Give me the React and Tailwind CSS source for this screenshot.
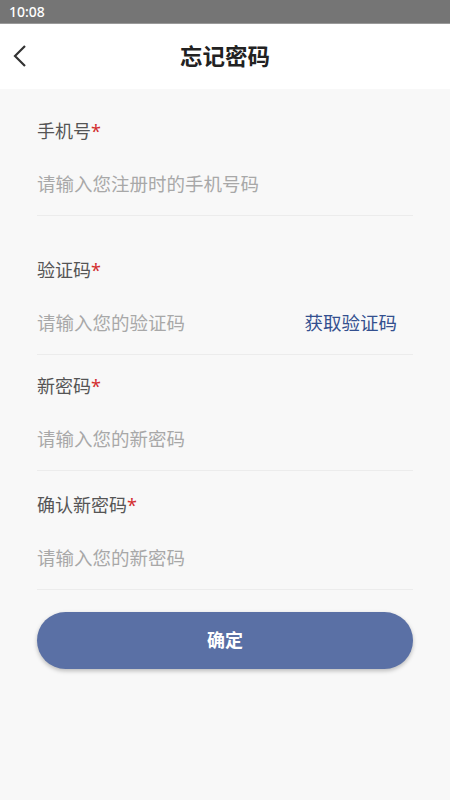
const Field = ({ label, placeholder, extra, className }) => (
	<div className={className}>
		<div className="text-[18px] leading-[24px] text-[#555555]">
			{label}
			<span className="text-[#d32f2f]">*</span>
		</div>
		<div className="flex items-center justify-between mt-[29px] pb-[19px] border-b border-[#ececec]">
			<span className="text-[18.5px] leading-[24px] text-[#a8a8a8]">{placeholder}</span>
			{extra && <span className="text-[18.5px] leading-[24px] text-[#34508f] mr-[16px]">{extra}</span>}
		</div>
	</div>
);

const App = () => {
	return (
		<div
			className="w-[450px] h-[800px] flex flex-col bg-[#f8f8f8]"
			style={{ fontFamily: '"Noto Sans", "Noto Sans CJK SC", sans-serif' }}
		>
			{/* 状态栏 */}
			<div className="h-[24px] bg-[#757575] flex items-center px-[9px] text-white text-[14px] font-medium border-b border-[#9a9a9a]">
				10:08
			</div>
			{/* 头部 */}
			<div className="h-[65px] bg-white flex items-center relative">
				<svg className="absolute left-[12px] top-[20px]" width="16" height="24" viewBox="0 0 16 24">
					<path d="M13 2 L3 12 L13 22" fill="none" stroke="#333333" strokeWidth="2.2" />
				</svg>
				<div className="w-full text-center text-[22.5px] font-bold text-[#222222]">忘记密码</div>
			</div>
			{/* 表单 */}
			<div className="px-[37px] pt-[30px]">
				<Field label="手机号" placeholder="请输入您注册时的手机号码" />
				<Field className="mt-[42px]" label="验证码" placeholder="请输入您的验证码" extra="获取验证码" />
				<Field className="mt-[19px]" label="新密码" placeholder="请输入您的新密码" />
				<Field className="mt-[22px]" label="确认新密码" placeholder="请输入您的新密码" />
				<button className="mt-[22px] w-full h-[57px] rounded-full bg-[#5a70a5] text-white text-[18px] font-bold shadow-[0_2px_4px_rgba(0,0,0,0.25)]">
					确定
				</button>
			</div>
		</div>
	);
};

export default App;
